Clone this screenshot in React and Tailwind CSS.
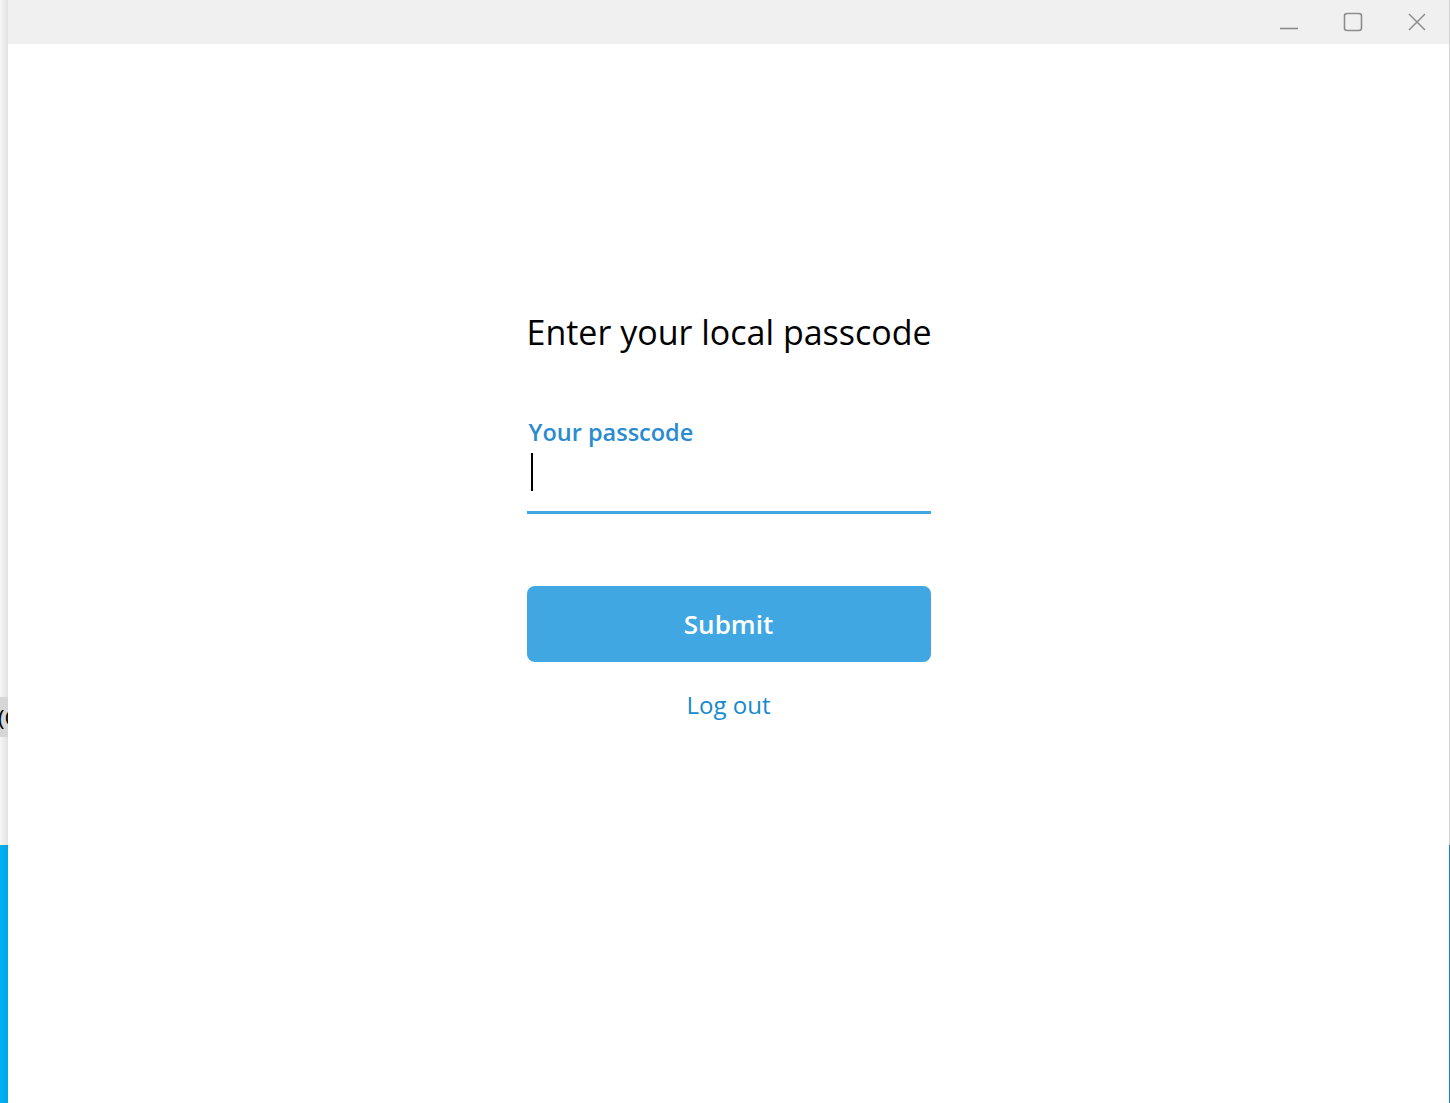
export default function App() {
  return (
    <div className="flex h-[1103px] w-[1450px] overflow-hidden bg-white" style={{ fontFamily: '"Open Sans", "Noto Sans", sans-serif' }}>
      {/* left desktop strip */}
      <div className="flex w-[8px] shrink-0 flex-col">
        <div className="h-[697px] bg-gradient-to-r from-[#f6f6f6] to-[#e2e2e2]" />
        <div className="flex h-[40px] items-center overflow-hidden bg-[#d6d6d6]">
          <span className="-ml-[2px] whitespace-nowrap text-[22px] leading-none text-black">(C</span>
        </div>
        <div className="h-[108px] bg-gradient-to-r from-[#f6f6f6] to-[#e2e2e2]" />
        <div className="flex-1 bg-gradient-to-r from-[#00b2f2] to-[#00a4e6]" />
      </div>

      {/* window */}
      <div className="flex flex-1 flex-col bg-white">
        <div className="flex h-[44px] items-center justify-end bg-[#f0f0f0]">
          <svg width="20" height="20" viewBox="0 0 20 20" className="mr-[44px] mt-[4px]">
            <line x1="1" y1="14.5" x2="19" y2="14.5" stroke="#8c8c8c" strokeWidth="1.6" />
          </svg>
          <svg width="20" height="20" viewBox="0 0 20 20" className="mr-[44px]">
            <rect x="1.5" y="1.5" width="17" height="17" rx="2.5" fill="none" stroke="#8c8c8c" strokeWidth="1.6" />
          </svg>
          <svg width="20" height="20" viewBox="0 0 20 20" className="mr-[22px]">
            <path d="M2 2 L18 18 M18 2 L2 18" stroke="#8c8c8c" strokeWidth="1.5" />
          </svg>
        </div>
        <div className="flex flex-1 flex-col items-center">
          <div className="mt-[266px] flex w-[404px] flex-col">
            <div className="whitespace-nowrap text-[34px] leading-[44px] text-black">Enter your local passcode</div>
            <div className="mt-[62px] pl-[2px] text-[23.5px] font-semibold leading-[32px] text-[#2a8bd0]">Your passcode</div>
            <div className="flex h-[66px] items-start border-b-[3px] border-[#40a7e3] pl-[4px] pt-[5px]">
              <div className="h-[38px] w-[2px] bg-black" />
            </div>
            <button className="mt-[72px] flex h-[76px] items-center justify-center rounded-[8px] bg-[#40a7e3] text-[26px] font-semibold text-white">
              Submit
            </button>
            <div className="mt-[23px] text-center text-[24px] leading-[40px] text-[#168acd]">Log out</div>
          </div>
        </div>
      </div>

      {/* right desktop edge */}
      <div className="flex w-[1px] shrink-0 flex-col">
        <div className="h-[845px] bg-[#d4d4d4]" />
        <div className="flex-1 bg-[#1a80c6]" />
      </div>
    </div>
  );
}
